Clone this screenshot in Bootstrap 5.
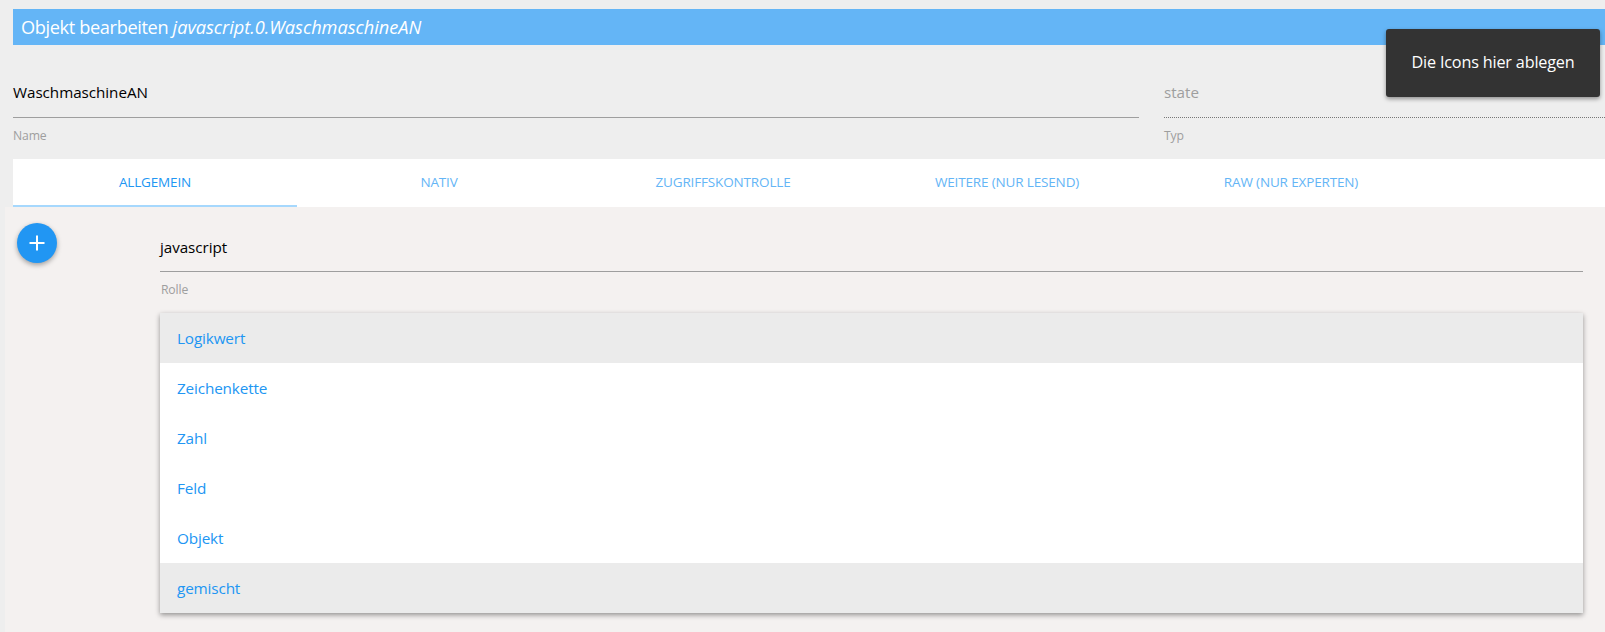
<!DOCTYPE html>
<html lang="de">
<head>
<meta charset="utf-8">
<title>Objekt bearbeiten</title>
<link rel="stylesheet" href="https://cdn.jsdelivr.net/npm/bootstrap@5.3.0/dist/css/bootstrap.min.css">
<style>
html,body{height:100%}
body{background:#eee;font-family:"Open Sans","Noto Sans",sans-serif;overflow:hidden;position:relative}
.shell{padding:9px 0 0 13px}
.title-bar{background:#64b5f6;color:#fff;height:36px;line-height:36px;padding-left:8px;font-size:18.2px;letter-spacing:-.37px}
.title-bar em{letter-spacing:-.02px}
.fields{padding-top:21px;gap:25px;height:114px}
.fld-name{width:1126px}
.fld-type{flex:1}
.fld-val{height:52px;line-height:53px;font-size:15.2px;color:#000;letter-spacing:-.03px;border-bottom:1px solid #9e9e9e;box-sizing:border-box}
.fld-type .fld-val{color:#9e9e9e;border-bottom:1px dotted #777}
.fld-lab{font-size:12.2px;color:#9e9e9e;margin-top:10px;line-height:16px;letter-spacing:-.15px}
.tabbar{background:#fff;height:48px;flex-wrap:nowrap}
.tabbar .nav-link{width:284px;height:48px;padding:0;line-height:47px;text-align:center;font-size:13.5px;color:#64b5f6;letter-spacing:-.15px;border:0;border-radius:0}
.tabbar .nav-link.active{color:#2196f3;border-bottom:2px solid #a6d8fd}
.pane{background:#f4f1f0;margin-left:-8px;height:425px;padding:16px 22px 0 12px}
.fab{width:40px;height:40px;background:#2196f3;box-shadow:0 2px 5px rgba(0,0,0,.35);padding:0;border:0}
.main-col{margin-left:103px;flex:1}
.role-val{height:49px;line-height:49px;font-size:15.2px;color:#000;border-bottom:1px solid #9e9e9e;letter-spacing:-.05px;box-sizing:border-box}
.role-lab{font-size:12.2px;color:#9e9e9e;margin-top:10px;line-height:16px;letter-spacing:-.15px;padding-left:1px}
.menu-list{margin-top:15px;border-radius:0;box-shadow:0 2px 5px rgba(0,0,0,.4)}
.menu-list .list-group-item{height:50px;line-height:50px;padding:0 17px;border:0;border-radius:0;background:#fff;color:#2196f3;font-size:15.3px;letter-spacing:-.15px}
.menu-list .list-group-item.picked{background:#ebebeb}
.drop-hint{position:absolute;left:1386px;top:29px;width:214px;height:68px;line-height:66px;text-align:center;background:#333;color:#fff;border-radius:3px;font-size:16.2px;letter-spacing:-.17px;box-shadow:0 2px 4px rgba(0,0,0,.4)}
</style>
</head>
<body>
<div class="shell">
  <div class="title-bar">Objekt bearbeiten <em>javascript.0.WaschmaschineAN</em></div>
  <div class="fields d-flex">
    <div class="fld-name">
      <div class="fld-val">WaschmaschineAN</div>
      <div class="fld-lab">Name</div>
    </div>
    <div class="fld-type">
      <div class="fld-val">state</div>
      <div class="fld-lab">Typ</div>
    </div>
  </div>
  <ul class="nav tabbar">
    <li class="nav-item"><a class="nav-link active" href="#">ALLGEMEIN</a></li>
    <li class="nav-item"><a class="nav-link" href="#">NATIV</a></li>
    <li class="nav-item"><a class="nav-link" href="#">ZUGRIFFSKONTROLLE</a></li>
    <li class="nav-item"><a class="nav-link" href="#">WEITERE (NUR LESEND)</a></li>
    <li class="nav-item"><a class="nav-link" href="#">RAW (NUR EXPERTEN)</a></li>
  </ul>
  <div class="pane d-flex align-items-start">
    <button class="fab btn rounded-circle d-flex align-items-center justify-content-center" type="button" aria-label="Hinzufügen">
      <svg width="16" height="16" viewBox="0 0 16 16"><path d="M8 .5v15M.5 8h15" stroke="#fff" stroke-width="2"/></svg>
    </button>
    <div class="main-col">
      <div class="role-val">javascript</div>
      <div class="role-lab">Rolle</div>
      <div class="list-group menu-list">
        <a class="list-group-item picked" href="#">Logikwert</a>
        <a class="list-group-item" href="#">Zeichenkette</a>
        <a class="list-group-item" href="#">Zahl</a>
        <a class="list-group-item" href="#">Feld</a>
        <a class="list-group-item" href="#">Objekt</a>
        <a class="list-group-item picked" href="#">gemischt</a>
      </div>
    </div>
  </div>
</div>
<div class="drop-hint">Die Icons hier ablegen</div>
<script src="https://cdn.jsdelivr.net/npm/bootstrap@5.3.0/dist/js/bootstrap.bundle.min.js"></script>
</body>
</html>
